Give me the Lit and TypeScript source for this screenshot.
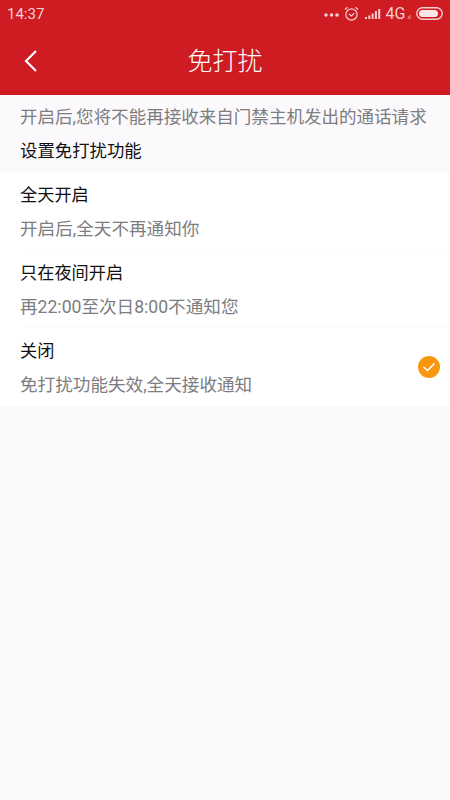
import { LitElement, html, css } from "lit";
import { customElement } from "lit/decorators.js";

const rows = [
  { t: "全天开启", d: "开启后,全天不再通知你", on: false },
  { t: "只在夜间开启", d: "再22:00至次日8:00不通知您", on: false },
  { t: "关闭", d: "免打扰功能失效,全天接收通知", on: true },
];

@customElement("app-root")
export class AppRoot extends LitElement {
  static styles = css`
    :host {
      display: block;
      width: 450px;
      height: 800px;
      background: #fbf9fc;
      font-family: "Roboto", "Noto Sans CJK SC", sans-serif;
      overflow: hidden;
    }
    .head { background: #cf1b22; height: 95px; color: #fff; display: flex; flex-direction: column; }
    .status { height: 27px; display: flex; align-items: center; padding: 0 7px; color: #f6cfd1; font-size: 15px; }
    .time { flex: 1; }
    .status svg { display: block; }
    .dots { margin-right: 5px; }
    .alarm { margin-right: 6px; }
    .signal { margin-right: 5px; }
    .net { font-size: 16px; }
    .gen { font-size: 6px; margin: 5px 5px 0 1px; }
    .nav { flex: 1; display: flex; align-items: center; padding: 0 38px 0 23px; }
    .nav .title { flex: 1; text-align: center; font-size: 25px; line-height: 1; font-weight: 300; }
    .intro { padding: 10px 20px 8px; }
    .hint { font-size: 17.55px; line-height: 25px; color: #7d7d7f; white-space: nowrap; }
    .sec { font-size: 17.4px; line-height: 25px; color: #111; margin-top: 9px; }
    .list { background: #fff; }
    .row { height: 77px; box-sizing: border-box; padding: 3px 10px 0 20px; display: flex; align-items: center; }
    .row.last { height: 78px; }
    .sep { height: 1px; margin-left: 24px; background: #fbfafb; }
    .txt { flex: 1; }
    .t { font-size: 17.2px; line-height: 25px; color: #111; }
    .d { font-size: 17.6px; line-height: 25px; color: #7d7d7f; margin-top: 9px; }
    .check { width: 22px; height: 22px; border-radius: 50%; background: #f9970f; display: flex; align-items: center; justify-content: center; margin-top: -3px; }
  `;

  render() {
    return html`
      <div class="head">
        <div class="status">
          <span class="time">14:37</span>
          <svg class="dots" width="15" height="6" viewBox="0 0 15 6"><g fill="#f6cfd1"><circle cx="2" cy="4" r="1.8"/><circle cx="7.5" cy="4" r="1.8"/><circle cx="13" cy="4" r="1.8"/></g></svg>
          <svg class="alarm" width="15" height="16" viewBox="0 0 15 16" fill="none" stroke="#f6cfd1" stroke-width="1.2"><circle cx="7.5" cy="8.5" r="5.6"/><path d="M5 8 7.5 10 10.3 7.2M1 3.5 3.5 1.2M14 3.5 11.5 1.2"/></svg>
          <svg class="signal" width="16" height="12" viewBox="0 0 16 12" fill="#f6cfd1"><rect x="0" y="9" width="2" height="2"/><rect x="3.3" y="7.5" width="2" height="3.5"/><rect x="6.6" y="5.5" width="2" height="5.5"/><rect x="9.9" y="3" width="2" height="8"/><rect x="13.2" y="1" width="2" height="10"/></svg>
          <span class="net">4G</span><span class="gen">.ıl</span>
          <svg width="27" height="13" viewBox="0 0 27 13"><rect x="0.8" y="0.8" width="25.4" height="11.4" rx="5.7" fill="none" stroke="#f6cfd1" stroke-width="1.4"/><rect x="3" y="3" width="19" height="7" rx="3.5" fill="#fbe6e7"/></svg>
        </div>
        <div class="nav">
          <svg width="15" height="24" viewBox="0 0 15 24" fill="none" stroke="#fff" stroke-width="2.2"><path d="M13 2 3 12 13 22"/></svg>
          <div class="title">免打扰</div>
        </div>
      </div>
      <div class="intro">
        <div class="hint">开启后,您将不能再接收来自门禁主机发出的通话请求</div>
        <div class="sec">设置免打扰功能</div>
      </div>
      <div class="list">
        ${rows.map((r, i) => html`
          <div class="row ${i === rows.length - 1 ? "last" : ""}">
            <div class="txt">
              <div class="t">${r.t}</div>
              <div class="d">${r.d}</div>
            </div>
            ${r.on ? html`<div class="check"><svg width="14" height="12" viewBox="0 0 14 12" fill="none" stroke="#fff" stroke-width="1.6"><path d="M1.5 6 5.5 9.5 12.5 2.5"/></svg></div>` : ""}
          </div>
          ${i < rows.length - 1 ? html`<div class="sep"></div>` : ""}`)}
      </div>
    `;
  }
}
